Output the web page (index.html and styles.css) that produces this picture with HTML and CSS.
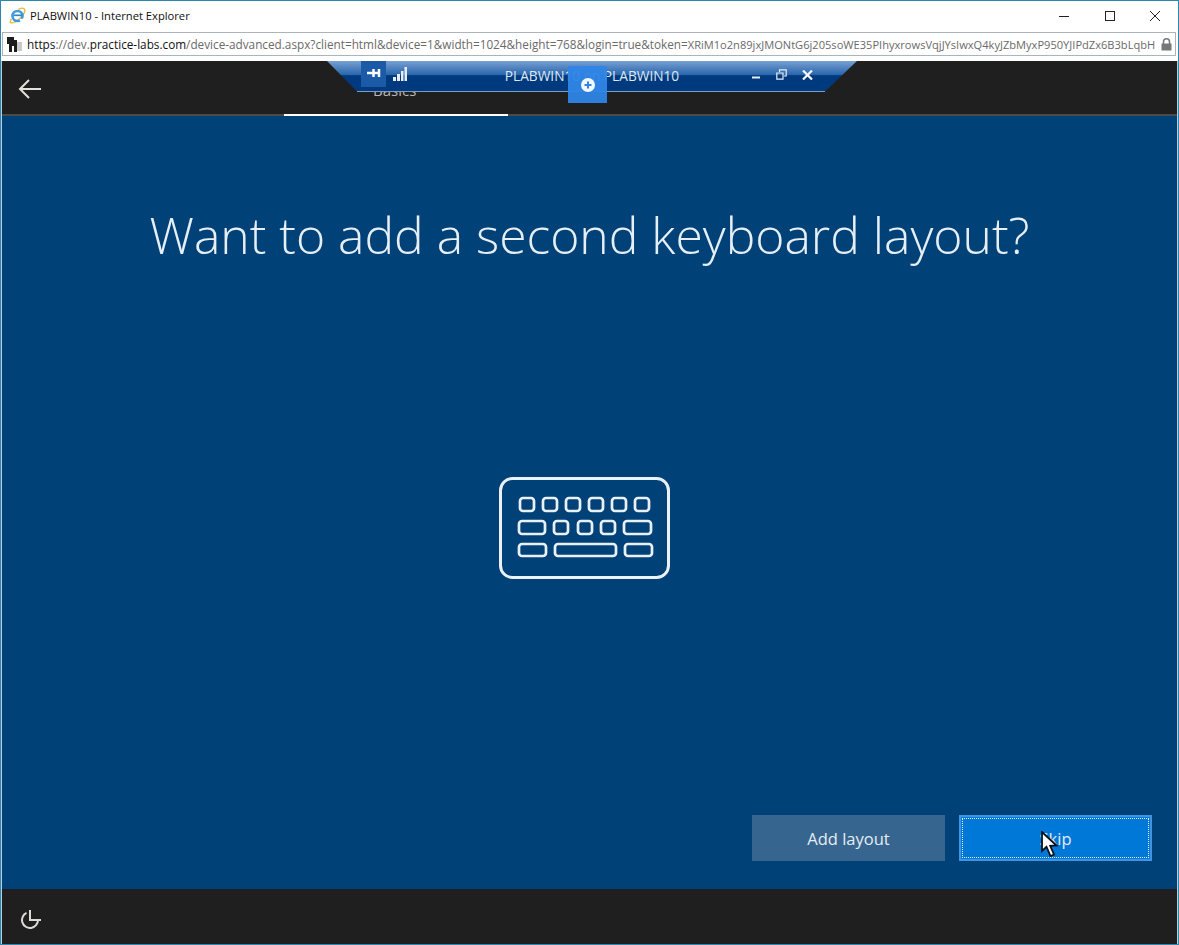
FILE: index.html
```html
<!DOCTYPE html>
<html lang="en">
<head>
<meta charset="utf-8">
<title>PLABWIN10 - Internet Explorer</title>
<link rel="stylesheet" href="styles.css">
</head>
<body>
<div class="window">
  <div class="titlebar">
    <svg class="ie-logo" width="17" height="17" viewBox="0 0 18 18">
      <path d="M2.500 12.500C.5 16 1.500 17.500 4.500 16.500 8 15.300 13 11 16 6.500 17.500 3 16.500 .8 13.500 1.200 12 1.400 11 2 10 2.600" fill="none" stroke="#e8b93c" stroke-width="1.500"/>
      <circle cx="9" cy="9.500" r="5.300" fill="none" stroke="#3f9bdc" stroke-width="2.800"/>
      <path d="M5 8.800H14" stroke="#2f86cc" stroke-width="1.800"/>
      <path d="M11 12.500H15.500V14L12 15.500Z" fill="#fff"/>
    </svg>
    <span class="title-text">PLABWIN10 - Internet Explorer</span>
    <div class="win-controls">
      <svg width="12" height="12" viewBox="0 0 12 12"><path d="M0 6.500H10" stroke="#222"/></svg>
      <svg width="12" height="12" viewBox="0 0 12 12"><rect x="1.500" y="1.500" width="9" height="9" fill="none" stroke="#222"/></svg>
      <svg width="12" height="12" viewBox="0 0 12 12"><path d="M1 1L11 11M11 1L1 11" stroke="#222"/></svg>
    </div>
  </div>
  <div class="addressbar">
    <svg class="favicon" width="16" height="17" viewBox="0 0 16 17">
      <path d="M0 1H4V16H2V8H0ZM4 1H7V4H10V16H7V10H5V16H4Z" fill="#1c1c1c"/>
      <path d="M10 6H15V15H10Z" fill="#c9c9c9"/>
    </svg>
    <div class="url"><span class="dark">https</span>://dev.<span class="dark">practice-labs.com</span>/device-advanced.aspx?client=html&amp;device=1&amp;width=1024&amp;height=768&amp;login=true&amp;token=<span class="token">XRiM1o2n89jxJMONtG6j205soWE35PIhyxrowsVqjJYsIwxQ4kyJZbMyxP950YJIPdZx6B3bLqbH</span></div>
    <svg class="lock" width="11" height="13" viewBox="0 0 11 13">
      <path d="M2.500 6V3.800a3 3 0 0 1 6 0V6" fill="none" stroke="#777" stroke-width="1.500"/>
      <rect x="0.500" y="5.500" width="10" height="7" fill="#777"/>
    </svg>
  </div>
  <div class="screen">
    <header class="oobe-header">
      <svg class="back" width="24" height="20" viewBox="0 0 24 20">
        <path d="M23 10H2M11 1L2 10L11 19" fill="none" stroke="#e4e0dc" stroke-width="2"/>
      </svg>
      <span class="tab-label">Basics</span>
    </header>
    <div class="tabline"><div class="tab-active"></div></div>
    <main class="content">
      <h1>Want to add a second keyboard layout?</h1>
      <svg class="keyboard" width="172" height="102" viewBox="0 0 172 102">
        <g fill="none" stroke="#e9f1f7" stroke-width="2.700">
          <rect x="1.500" y="1.500" width="168" height="99" rx="12" stroke-width="3"/>
          <rect x="21" y="21" width="14" height="13" rx="3"/>
          <rect x="44" y="21" width="14" height="13" rx="3"/>
          <rect x="67" y="21" width="14" height="13" rx="3"/>
          <rect x="90" y="21" width="14" height="13" rx="3"/>
          <rect x="113" y="21" width="14" height="13" rx="3"/>
          <rect x="136" y="21" width="14" height="13" rx="3"/>
          <rect x="20" y="44" width="26" height="13" rx="3"/>
          <rect x="55" y="44" width="14" height="13" rx="3"/>
          <rect x="79" y="44" width="14" height="13" rx="3"/>
          <rect x="102" y="44" width="14" height="13" rx="3"/>
          <rect x="125" y="44" width="27" height="13" rx="3"/>
          <rect x="20" y="67" width="27" height="12" rx="3"/>
          <rect x="56" y="67" width="61" height="12" rx="3"/>
          <rect x="126" y="67" width="27" height="12" rx="3"/>
        </g>
      </svg>
      <div class="actions">
        <button class="btn btn-secondary">Add layout</button>
        <button class="btn btn-primary"><span class="focus-ring">Skip</span></button>
      </div>
    </main>
    <footer class="oobe-footer">
      <svg class="power" width="24" height="22" viewBox="0 0 24 22">
        <path d="M7.500 3.800A8 8 0 1 0 19 11M22 11H11V1" fill="none" stroke="#dedad6" stroke-width="2"/>
      </svg>
    </footer>
    <div class="rdp-bar">
      <svg class="rdp-shape" width="530" height="32" viewBox="0 0 530 32">
        <defs>
          <linearGradient id="barfill" x1="0" y1="0" x2="0" y2="1">
            <stop offset="0" stop-color="#77a0d2"/>
            <stop offset="0.45" stop-color="#2a66ad"/>
            <stop offset="0.48" stop-color="#003a7e"/>
            <stop offset="1" stop-color="#003a7e"/>
          </linearGradient>
        </defs>
        <path d="M0 0H530L498 30.500H30Z" fill="url(#barfill)"/>
        <path d="M30 30.500H498" stroke="#7d9cc4" stroke-width="1.200"/>
      </svg>
      <div class="pin-box">
        <svg width="16" height="10" viewBox="0 0 16 10"><path d="M1 5H14M7.500 1V9M13 1V9" stroke="#fff" stroke-width="2.500"/></svg>
      </div>
      <svg class="signal" width="14" height="14" viewBox="0 0 14 14">
        <path d="M0 10H3V14H0ZM4 7H7V14H4ZM8 4H10.500V14H8ZM11.500 0H14V14H11.500Z" fill="#e8eef6"/>
      </svg>
      <span class="rdp-title">PLABWIN10 on PLABWIN10</span>
      <div class="rdp-controls">
        <svg width="9" height="9" viewBox="0 0 9 9"><path d="M0 7.500H8" stroke="#e8eef6" stroke-width="2"/></svg>
        <svg width="11" height="11" viewBox="0 0 11 11"><path d="M0.800 4H7V10.200H0.800ZM3.500 3V0.800H10.200V7H8" fill="none" stroke="#e8eef6" stroke-width="1.200"/></svg>
        <svg width="11" height="10" viewBox="0 0 11 10"><path d="M1 .5L10 9.500M10 .5L1 9.500" stroke="#f4f7fb" stroke-width="2.200"/></svg>
      </div>
    </div>
    <div class="rdp-handle">
      <svg width="14" height="14" viewBox="0 0 14 14"><circle cx="7" cy="7" r="7" fill="#f2f7fd"/><path d="M3.500 7H10.500M7 3.500V10.500" stroke="#2f85e6" stroke-width="2"/></svg>
    </div>
    <svg class="cursor" width="18" height="26" viewBox="0 0 18 26">
      <path d="M1 1V20L5.500 15.800L9.500 25L13 23.500L9.200 14.800L15.500 14.500Z" fill="#fff" stroke="#07111c" stroke-width="1.800"/>
    </svg>
  </div>
</div>
</body>
</html>
```
FILE: styles.css
```css
* { box-sizing: border-box; }
html, body { margin: 0; padding: 0; }
body { width: 1179px; height: 945px; overflow: hidden; background: #fff; font-family: "Open Sans", "Liberation Sans", sans-serif; }

.window {
  width: 1179px;
  height: 945px;
  display: flex;
  flex-direction: column;
  border: 1px solid #2f86ad;
  background: #fff;
}

.titlebar {
  height: 29px;
  flex: none;
  display: flex;
  align-items: center;
  padding: 0 0 0 8px;
}
.ie-logo { flex: none; margin-right: 4px; }
.title-text { font-size: 11.200px; color: #111; white-space: nowrap; }
.win-controls { margin-left: auto; margin-right: 17px; display: flex; gap: 33px; align-items: center; }

.addressbar {
  height: 24px;
  flex: none;
  margin: 2px 2px 5px 1px;
  border: 1px solid #a9b4bb;
  display: flex;
  align-items: center;
  padding: 0 3px 0 4px;
  background: #fff;
}
.favicon { flex: none; margin-right: 4px; }
.url {
  flex: 1;
  min-width: 0;
  overflow: hidden;
  white-space: nowrap;
  font-size: 11.750px;
  color: #6a6a6a;
}
.url .dark { color: #111; }
.url .token { font-size: 11.100px; }
.lock { flex: none; margin-left: 6px; }

.screen {
  position: relative;
  flex: 1;
  display: flex;
  flex-direction: column;
  min-height: 0;
  border-left: 1px solid #bcd;
  border-right: 1px solid #bcd;
  background: #004177;
}

.oobe-header {
  height: 53px;
  flex: none;
  background: #1f1f1f;
  display: flex;
  align-items: center;
  padding-left: 16px;
  position: relative;
}
.back { flex: none; margin-top: 2px; }
.tab-label {
  position: absolute;
  left: 371px;
  top: 19px;
  color: #b5b5b5;
  font-size: 15px;
}
.tabline { height: 2px; flex: none; background: #4a4a4a; }
.tab-active { width: 224px; height: 2px; margin-left: 282px; background: #fff; }

.content {
  flex: 1;
  min-height: 0;
  display: flex;
  flex-direction: column;
  align-items: center;
  background: #004177;
}
h1 {
  margin: 79px 0 0;
  font-family: "Open Sans", "Liberation Sans", sans-serif;
  font-weight: 300;
  font-size: 49.800px;
  line-height: 80px;
  color: #e6eff6;
  white-space: nowrap;
}
.keyboard { margin-top: 202px; margin-left: -10px; flex: none; }
.actions {
  margin-top: auto;
  margin-bottom: 28px;
  align-self: flex-end;
  display: flex;
  gap: 14px;
  padding-right: 25px;
}
.btn {
  width: 193px;
  height: 46px;
  border: 0;
  padding: 0;
  font-family: "Open Sans", "Liberation Sans", sans-serif;
  font-size: 16.500px;
  color: #e6edf3;
}
.btn-secondary { background: #36658f; }
.btn-primary { background: #0078d7; border: 2px solid #3f94e4; padding: 1px; }
.focus-ring {
  display: flex;
  align-items: center;
  justify-content: center;
  height: 100%;
  border: 1px dotted #e8f2fb;
}

.oobe-footer {
  height: 55px;
  flex: none;
  background: #1f1f1f;
  display: flex;
  align-items: center;
  padding-left: 17px;
}
.power { margin-top: 7px; }

.rdp-bar {
  position: absolute;
  left: 325px;
  top: 0;
  width: 530px;
  height: 32px;
}
.rdp-shape { position: absolute; left: 0; top: 0; }
.pin-box {
  position: absolute;
  left: 34px;
  top: 0;
  width: 25px;
  height: 26px;
  background: #1a5aa6;
  display: flex;
  align-items: center;
  justify-content: center;
  padding-bottom: 2px;
}
.signal { position: absolute; left: 66px; top: 6px; }
.rdp-title {
  position: absolute;
  left: 176px;
  top: 6px;
  width: 178px;
  text-align: center;
  white-space: nowrap;
  color: #dfe8f3;
  font-size: 13.700px;
  line-height: 18px;
}
.rdp-controls {
  position: absolute;
  left: 425px;
  top: 8px;
  display: flex;
  align-items: center;
  gap: 15px;
}
.rdp-handle {
  position: absolute;
  left: 566px;
  top: 5px;
  width: 39px;
  height: 37px;
  background: rgba(47, 133, 230, 0.95);
  display: flex;
  align-items: center;
  justify-content: center;
}
.cursor { position: absolute; left: 1039px; top: 770px; }
```
